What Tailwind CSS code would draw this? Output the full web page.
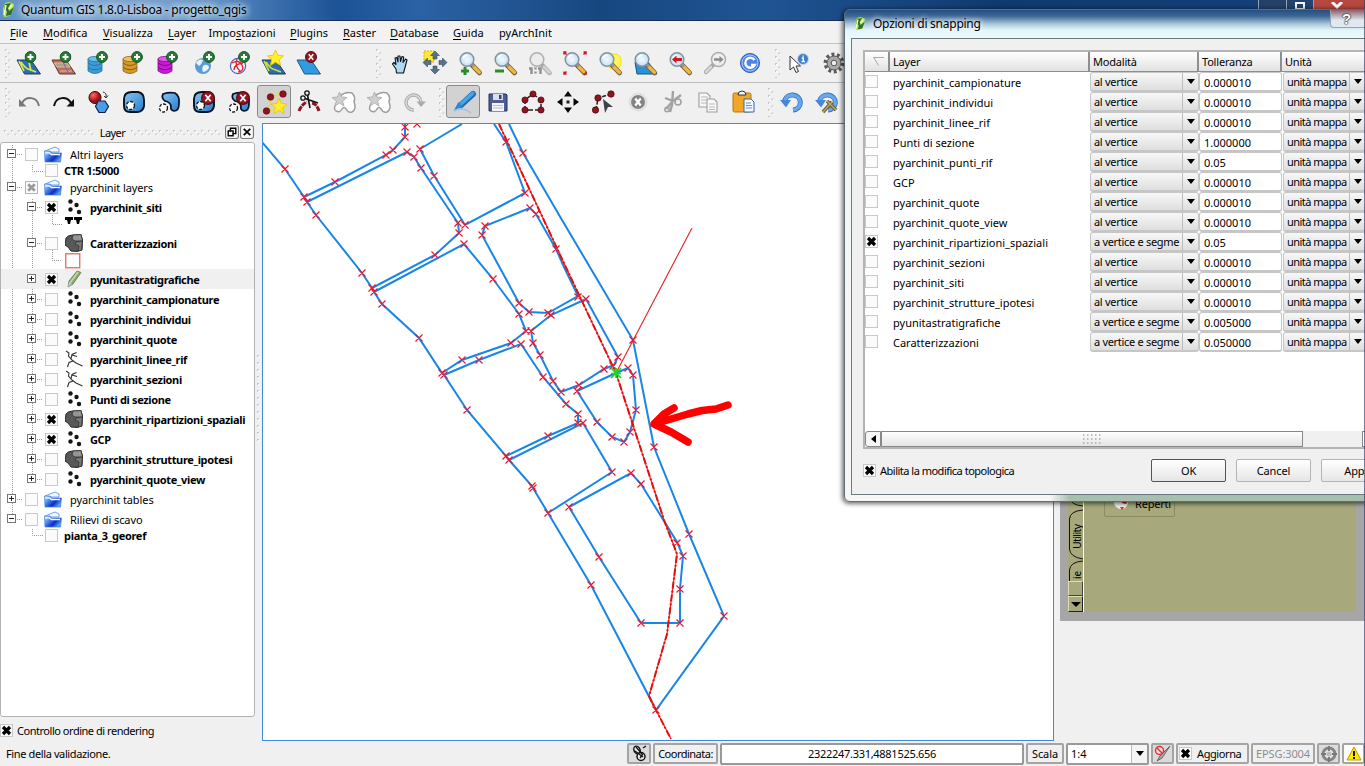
<!DOCTYPE html>
<html lang="it">
<head>
<meta charset="utf-8">
<title>Quantum GIS 1.8.0-Lisboa - progetto_qgis</title>
<script src="https://cdn.jsdelivr.net/npm/@tailwindcss/browser@4"></script>
</head>
<body class="bg-[#f0f0f0]">
<!-- shared icon symbols, 28 x 28 with the origin in the middle -->
<svg class="absolute h-0 w-0">
  <defs>
    <linearGradient id="gb" x1="0" y1="0" x2="1" y2="1"><stop offset="0" stop-color="#8cc4ee"/><stop offset="1" stop-color="#1f7fd0"/></linearGradient>
    <linearGradient id="gf" x1="0" y1="0" x2="1" y2=".6"><stop offset="0" stop-color="#e8f4ff"/><stop offset=".3" stop-color="#5a9cf0"/><stop offset=".7" stop-color="#0c2cc0"/><stop offset="1" stop-color="#5aa0f0"/></linearGradient>
    <radialGradient id="gl"><stop offset="0" stop-color="#f4fbff"/><stop offset="1" stop-color="#c3dff2"/></radialGradient>
    <radialGradient id="gr" cx=".35" cy=".3"><stop offset="0" stop-color="#ff6a6a"/><stop offset="1" stop-color="#a80c18"/></radialGradient>
    <symbol id="plus" viewBox="-6 -6 12 12"><circle r="5.4" fill="#2a7a38" stroke="#12501f"/><path d="M-3 0H3M0-3V3" stroke="#fff" stroke-width="1.9"/></symbol>
    <symbol id="ex" viewBox="-6 -6 12 12"><circle r="5.5" fill="#921620" stroke="#5e0a12"/><path d="M-2.3-2.8L2.3 2.8M2.3-2.8L-2.3 2.8" stroke="#fff" stroke-width="1.5"/></symbol>
    <symbol id="star" viewBox="-8 -8 16 16"><path d="M0-7.500L2.200-2.600L7.500-2L3.600 1.500L4.800 7L0 4L-4.800 7L-3.600 1.500L-7.500-2L-2.200-2.600Z" fill="#fff02a" stroke="#f4bc00" stroke-width=".8"/></symbol>
    <symbol id="lens" viewBox="-14 -14 28 28"><path d="M2 2L9.500 9.800" stroke="#7a6238" stroke-width="5" stroke-linecap="round"/><path d="M4 4L9.400 9.400" stroke="#f0b542" stroke-width="3.400" stroke-linecap="round"/><path d="M2 1.500L4 3.500" stroke="#999" stroke-width="3"/><circle cx="-3" cy="-3.500" r="6.800" fill="url(#gl)" stroke="#86939c" stroke-width="1.500"/><path d="M-7-4.500Q-6-8-2.500-7.800" stroke="#fff" stroke-width="1.500" fill="none"/></symbol>
    <symbol id="lensg" viewBox="-14 -14 28 28"><path d="M2 2L9.500 9.800" stroke="#a8a8a8" stroke-width="4.600" stroke-linecap="round"/><path d="M4 4L9.400 9.400" stroke="#d2d2d2" stroke-width="3" stroke-linecap="round"/><circle cx="-3" cy="-3.500" r="6.800" fill="#ececec" stroke="#aeaeae" stroke-width="1.500"/></symbol>

    <symbol id="addvec" viewBox="-14 -14 28 28"><path d="M-12-3H2L11.500 11H-4.500Z" fill="#2d6cb0" stroke="#1f3d5c"/><path d="M-8-1Q-4 5-1 6T7 9M-10-2L-5 8M0-1L2 8" stroke="#d9e94a" stroke-width="1.700" fill="none"/><use href="#plus" x="-4.500" y="-12" width="12" height="12"/></symbol>
    <symbol id="addras" viewBox="-14 -14 28 28"><path d="M-12-3H2L11.500 11H-4.500Z" fill="#b9705c" stroke="#5c3a30"/><path d="M-10 0H3L6 4H-7ZM-4 8H8" fill="#a9a487" stroke="#e9b7a2"/><path d="M-2-3L5 11" stroke="#7f5fa8"/><use href="#plus" x="-4.500" y="-12" width="12" height="12"/></symbol>
    <symbol id="addpg" viewBox="-14 -14 28 28"><path d="M-11-4V8Q-4 13 3 8V-4Z" fill="#3c9bd4" stroke="#2273a4" stroke-width=".8"/><ellipse cx="-4" cy="-4" rx="7" ry="2.600" fill="#6dbde8" stroke="#2273a4" stroke-width=".8"/><path d="M-11 0Q-4 5 3 0M-11 4.500Q-4 9 3 4.500" stroke="#2273a4" stroke-width=".9" fill="none"/><use href="#plus" x="-3" y="-12" width="12" height="12"/></symbol>
    <symbol id="addsl" viewBox="-14 -14 28 28"><path d="M-11-4V8Q-4 13 3 8V-4Z" fill="#d5992c" stroke="#8d6418" stroke-width=".8"/><ellipse cx="-4" cy="-4" rx="7" ry="2.600" fill="#ecc05f" stroke="#8d6418" stroke-width=".8"/><path d="M-11 0Q-4 5 3 0M-11 4.500Q-4 9 3 4.500" stroke="#7d560d" stroke-width=".9" fill="none"/><use href="#plus" x="-3" y="-12" width="12" height="12"/></symbol>
    <symbol id="addms" viewBox="-14 -14 28 28"><path d="M-11-4V8Q-4 13 3 8V-4Z" fill="#c91bd6" stroke="#820a8c" stroke-width=".8"/><ellipse cx="-4" cy="-4" rx="7" ry="2.600" fill="#e257ec" stroke="#820a8c" stroke-width=".8"/><path d="M-11 0Q-4 5 3 0M-11 4.500Q-4 9 3 4.500" stroke="#73087b" stroke-width=".9" fill="none"/><use href="#plus" x="-3" y="-12" width="12" height="12"/></symbol>
    <symbol id="addwms" viewBox="-14 -14 28 28"><circle cx="-1" cy="3" r="8" fill="#5b9bd5"/><path d="M-8 0Q-5-5-1-3Q-2 1-5 3ZM0 2Q5 1 5 5Q2 9-1 9Q-3 5 0 2Z" fill="#e8f3fb"/><use href="#plus" x="-1" y="-12" width="12" height="12"/></symbol>
    <symbol id="addwfs" viewBox="-14 -14 28 28"><circle cx="-1" cy="3" r="7.600" fill="#f6f6ff" stroke="#4a62c4" stroke-width="1.200"/><path d="M-7 0Q0-4 3 2T-1 9M-5 7Q-5 1 4 0M-2-4Q-5 3 2 9" stroke="#e0202c" stroke-width="1.400" fill="none"/><use href="#plus" x="-1" y="-12" width="12" height="12"/></symbol>
    <symbol id="newshp" viewBox="-14 -14 28 28"><path d="M-12-3H2L11.500 11H-4.500Z" fill="#2d6cb0" stroke="#1f3d5c"/><path d="M-8-1Q-4 5-1 6T7 9M-10-2L-5 8" stroke="#bfe04a" stroke-width="1.700" fill="none"/><use href="#star" x="-7" y="-13.500" width="17" height="17"/></symbol>
    <symbol id="remlay" viewBox="-14 -14 28 28"><path d="M-12-3H2L11.500 11H-4.500Z" fill="#2f9be0" stroke="#1c5a86"/><use href="#ex" x="-4" y="-12" width="12" height="12"/></symbol>

    <symbol id="hand" viewBox="-14 -14 28 28"><path d="M-3.500 10L-4 6L-7.500 1L-6-.5L-4 1.500L-5-5L-3.300-5.500L-2-1L-2-7L0-7L.5-1.500L2-6.500L3.700-6L3-.5L5.500-4L7-3L5 4.500L3.500 10Z" fill="#aed9f5" stroke="#111" stroke-width="1.100" stroke-linejoin="round"/></symbol>
    <symbol id="pansel" viewBox="-14 -14 28 28"><rect x="-11" y="-12" width="10" height="11" fill="#ffe838" stroke="#d8b400" stroke-dasharray="2 1"/><g fill="#54748c" stroke="#263a48" stroke-width=".5"><path d="M0-12L4.500-7.500H2V-4H-2V-7.500H-4.500Z"/><path d="M0 11L4.500 6.500H2V3H-2V6.500H-4.500Z"/><path d="M-12-.5L-7.500-5V-2.500H-4V1.500H-7.500V4Z"/><path d="M12-.5L7.500-5V-2.500H4V1.500H7.500V4Z"/></g></symbol>
    <symbol id="zin" viewBox="-14 -14 28 28"><use href="#lens" x="-14" y="-14" width="28" height="28"/><path d="M-9 8H-1M-5 4V12" stroke="#2c8a2c" stroke-width="3"/></symbol>
    <symbol id="zout" viewBox="-14 -14 28 28"><use href="#lens" x="-14" y="-14" width="28" height="28"/><path d="M-10 8H-1" stroke="#2c8a2c" stroke-width="3"/></symbol>
    <symbol id="zact" viewBox="-14 -14 28 28"><use href="#lensg" x="-14" y="-14" width="28" height="28"/><path d="M-11 5.500H-8.500V11M-4.500 4.500V6.500M-4.500 8.500V10.500M-2 5.500H.5V11" stroke="#8f8f8f" stroke-width="2.400" fill="none"/></symbol>
    <symbol id="zfull" viewBox="-14 -14 28 28"><use href="#lens" x="-14" y="-14" width="28" height="28"/><g stroke="#d01622" stroke-width="1.500" fill="none"><path d="M-11-8.500V-11H-8.500M-11-11L-8.500-8.500M11-8.500V-11H8.500M11-11L8.500-8.500M-11 8.500V11H-8.500M-11 11L-8.500 8.500M11 8.500V11H8.500"/></g></symbol>
    <symbol id="zsel" viewBox="-14 -14 28 28"><rect x="-3" y="-9" width="14" height="15" rx="6" fill="#fff65a" stroke="#f2e400"/><use href="#lens" x="-14" y="-14" width="28" height="28"/></symbol>
    <symbol id="zlay" viewBox="-14 -14 28 28"><path d="M-10-1H3L12 11H-8Z" fill="#2a92da" stroke="#17527e"/><use href="#lens" x="-14" y="-14" width="28" height="28"/></symbol>
    <symbol id="zlast" viewBox="-14 -14 28 28"><use href="#lens" x="-14" y="-14" width="28" height="28"/><path d="M-8-3.500L-3.500-7.500V-5H2V-2H-3.500V.5Z" fill="#d8141e"/></symbol>
    <symbol id="znext" viewBox="-14 -14 28 28"><path d="M-2 2L-9 9" stroke="#a6a6a6" stroke-width="4.500" stroke-linecap="round"/><path d="M-4 4L-9 9" stroke="#d6d6d6" stroke-width="2.600" stroke-linecap="round"/><circle cx="3.500" cy="-3.500" r="7" fill="#efefef" stroke="#adadad" stroke-width="1.500"/><path d="M8.500-3.500L4.500-7V-4.700H-1V-2.300H4.500V0Z" fill="#8c8c8c"/></symbol>
    <symbol id="refresh" viewBox="-14 -14 28 28"><circle r="9.500" fill="#4b86e6" stroke="#2c5cc0"/><circle r="8" fill="none" stroke="#a9c8fa" stroke-width="1"/><path d="M4.500-3A5 5 0 1 0 4.800 2H1" stroke="#fff" stroke-width="2.300" fill="none"/></symbol>
    <symbol id="ident" viewBox="-14 -14 28 28"><path d="M-9-7V7L-5.500 4L-3 9.500L-.5 8.500L-3 3H1.500Z" fill="#fff" stroke="#333"/><circle cx="4" cy="-4" r="5.500" fill="#3f7fc9" stroke="#c8d8ea"/><path d="M2.700-5H4.300V-1.800M2.500-1.500H6M4.200-7.500V-6.300" stroke="#fff" stroke-width="1.400" fill="none"/></symbol>
    <symbol id="gear" viewBox="-14 -14 28 28"><circle r="8.700" fill="none" stroke="#5a5a5a" stroke-width="3.500" stroke-dasharray="2.900 2.560"/><circle r="7" fill="#a9a9a9" stroke="#555"/><circle r="2.800" fill="#eee" stroke="#555"/></symbol>

    <symbol id="undo" viewBox="-14 -14 28 28"><path d="M10 4C8-6-3-6-7 1" stroke="#777" stroke-width="1.900" fill="none"/><path d="M-10-3V4.500H-2.500Z" fill="#777"/></symbol>
    <symbol id="redo" viewBox="-14 -14 28 28"><path d="M-10 4C-8-6 3-6 7 1" stroke="#111" stroke-width="2" fill="none"/><path d="M10-3V4.500H2.500Z" fill="#111"/></symbol>
    <symbol id="simpl" viewBox="-14 -14 28 28"><circle cx="-4" cy="-4.500" r="6" fill="url(#gr)" stroke="#300" stroke-width="1"/><path d="M-1-1H6L9.500 4.500L6 10.500H0L-3.500 4.500Z" fill="#4b9be6" stroke="#0c2444" stroke-width="1.200"/><path d="M4-10Q8-9 7-5M5-6L7-4L9-6.500" stroke="#333" fill="none"/></symbol>
    <symbol id="ring" viewBox="-14 -14 28 28"><path d="M-10-3Q-10-10-2-10H4Q10-9 10-2V4Q9 10 3 10H-4Q-10 10-10 4Z" fill="url(#gb)" stroke="#06121f" stroke-width="1.900"/><circle cx="-3.500" cy="3.500" r="4" fill="#fff" stroke="#111" stroke-width="1.300" stroke-dasharray="3 1.500"/></symbol>
    <symbol id="part" viewBox="-14 -14 28 28"><path d="M-6-8Q0-10 6-9Q11-6 10 2Q10 9 5 9Q1 8 2 4Q1 0-4-1Q-8-4-6-8Z" fill="url(#gb)" stroke="#06121f" stroke-width="1.700"/><circle cx="-5.500" cy="6" r="4" fill="#fff" stroke="#111" stroke-width="1.300" stroke-dasharray="3 1.500"/></symbol>
    <symbol id="delring" viewBox="-14 -14 28 28"><use href="#ring" x="-14" y="-14" width="28" height="28"/><use href="#ex" x="-3" y="-11" width="14" height="14"/></symbol>
    <symbol id="delpart" viewBox="-14 -14 28 28"><use href="#part" x="-14" y="-14" width="28" height="28"/><use href="#ex" x="-3" y="-11" width="14" height="14"/></symbol>
    <symbol id="reshape" viewBox="-14 -14 28 28"><path d="M-6 9L-1-10M-4-5L8-8M-8 8L4 8" stroke="#f0d820" stroke-width="1.500" stroke-dasharray="3 1" fill="none"/><g fill="#8e1420" stroke="#500810" stroke-width=".6"><circle cx="-7.500" cy="9" r="3.300"/><circle cx="-3.500" cy="-5" r="3.300"/><circle cx="9" cy="-8" r="3.300"/></g><path d="M5-4L7.200 1.500L13 2L8.600 5.800L10 11.500L5 8.300L0 11.500L1.400 5.800L-3 2L2.800 1.500Z" fill="#fff02a" stroke="#f4bc00" stroke-width=".8"/></symbol>
    <symbol id="split" viewBox="-14 -14 28 28"><path d="M-10 9Q-7 2-2 0M10 9Q8 2 3 1" stroke="#8e1420" stroke-width="3" stroke-dasharray="5 1" fill="none"/><circle cx="-6" cy="-4" r="2.200" fill="none" stroke="#111" stroke-width="1.300"/><circle cx="-2" cy="-9" r="2.200" fill="none" stroke="#111" stroke-width="1.300"/><path d="M-4-3.500L9 1M-1.500-7L1 6" stroke="#111" stroke-width="1.600"/></symbol>
    <symbol id="mergeg" viewBox="-14 -14 28 28"><path d="M-4-6Q2-11 8-9Q12-5 10 0Q13 7 8 10Q4 11 2 7Q0 4-2 7Q-4 11-8 9Q-11 7-8 2Z" fill="#fff" stroke="#9d9d9d" stroke-width="1.500"/><path d="M-4.500-10L-2.500-5L3-4.500L-1.500-1L0 4L-4.500 1L-9 4L-7.500-1L-12-4.500L-6.500-5Z" fill="#cfcfcf" stroke="#b2b2b2"/></symbol>
    <symbol id="rotg" viewBox="-14 -14 28 28"><path d="M0 8A7.500 7.500 0 1 1 7 0" stroke="#aaa" stroke-width="3.400" fill="none"/><path d="M0 8A7.500 7.500 0 1 1 7 0" stroke="#d6d6d6" stroke-width="1.600" fill="none"/><path d="M2.500-.5H12L7 5Z" fill="#aaa"/></symbol>
    <symbol id="edit" viewBox="-14 -14 28 28"><path d="M-9 9Q0 4 8 11" stroke="#9cc4e2" stroke-width="1.500" fill="none"/><path d="M10-8L-2 3" stroke="#1d6fb4" stroke-width="6" stroke-linecap="round"/><path d="M9.500-8.500L-1.500 1.500" stroke="#4ba3e2" stroke-width="3.600" stroke-linecap="round"/><path d="M-4.500 0L-9 8L-.5 5Z" fill="#2f86cc"/></symbol>
    <symbol id="save" viewBox="-14 -14 28 28"><path d="M-9-8H8L9-7V9H-9Z" fill="#4f5d92" stroke="#27305a"/><rect x="-5" y="-8" width="10" height="6" fill="#d9deee"/><rect x="1" y="-7" width="2.500" height="4" fill="#39436e"/><rect x="-6" y="1" width="12" height="8" fill="#f4f5fa"/><path d="M-5 3.500H5M-5 6H5" stroke="#b8bdd0"/></symbol>
    <symbol id="addfeat" viewBox="-14 -14 28 28"><path d="M0-8L8-2L8 8H-8L-8-2Z" stroke="#222" stroke-width="1.500" stroke-dasharray="5 2" fill="none"/><g fill="#8e1420" stroke="#450810" stroke-width=".7"><circle cy="-8" r="3.100"/><circle cx="8" cy="-2" r="3.100"/><circle cx="-8" cy="-2" r="3.100"/><circle cx="8" cy="8" r="3.100"/><circle cx="-8" cy="8" r="3.100"/></g></symbol>
    <symbol id="move" viewBox="-14 -14 28 28"><path d="M0-11L4-5.500H-4ZM0 11L4 5.500H-4ZM-11 0L-5.500-4V4ZM11 0L5.500-4V4Z" fill="#080808"/><rect x="-1.500" y="-1.500" width="3" height="3" fill="#222"/></symbol>
    <symbol id="node" viewBox="-14 -14 28 28"><path d="M-7 8L-5-4L8-8" stroke="#222" stroke-width="1.500" stroke-dasharray="4 1.500" fill="none"/><g fill="#8e1420" stroke="#450810" stroke-width=".7"><circle cx="-7.500" cy="8" r="3.200"/><circle cx="-5" cy="-4" r="3.200"/><circle cx="8" cy="-8" r="3.200"/></g><path d="M0-3L10 5H5L2 11Z" fill="#3c4246"/></symbol>
    <symbol id="delg" viewBox="-14 -14 28 28"><circle r="9" fill="#e6e6e6" stroke="#dcdcdc"/><circle r="7" fill="#858585"/><path d="M-2.700-3.500L2.700 3.500M2.700-3.500L-2.700 3.500" stroke="#fff" stroke-width="2.200"/></symbol>
    <symbol id="cutg" viewBox="-14 -14 28 28"><path d="M0-11L-1 3L-3 10M-8-4L0-1L8-7M-1 0L-7 7" stroke="#a2a2a2" stroke-width="2.400" fill="none"/><circle cx="-6" cy="7.500" r="2.200" fill="none" stroke="#a2a2a2" stroke-width="1.500"/><circle cx="5" cy="0" r="3" fill="none" stroke="#a2a2a2" stroke-width="1.600"/></symbol>
    <symbol id="copyg" viewBox="-14 -14 28 28"><g fill="#f8f8f8" stroke="#9d9d9d" stroke-width="1.100"><path d="M-9-9H-1L2-6V5H-9Z"/><path d="M-1-3H6L9 0V10H-1Z"/></g><path d="M-7-5H0M-7-2H-1M-7 1H-1M1 2H7M1 5H7M1 7.500H7" stroke="#b6b6b6"/></symbol>
    <symbol id="paste" viewBox="-14 -14 28 28"><rect x="-10" y="-9" width="18" height="19" rx="1.500" fill="#f0a626" stroke="#b97410"/><path d="M-5-7Q-5-11-1-11T3-7Z" fill="#f5f5f5" stroke="#333"/><path d="M1-3H8L11 0V10H1Z" fill="#f4f9ff" stroke="#2d6bb5"/><path d="M3 1H8M3 3.500H9M3 6H9" stroke="#5d94d6"/></symbol>
    <symbol id="blueundo" viewBox="-14 -14 28 28"><path d="M-7.500-1A8 7.500 0 1 1 1 8" stroke="#2d72c4" stroke-width="5" fill="none"/><path d="M-7.500-1A8 7.500 0 1 1 1 8" stroke="#6aa8ea" stroke-width="3.400" fill="none"/><path d="M-12-2H-1L-6 5.500Z" fill="#4688d8"/></symbol>
    <symbol id="bluewr" viewBox="-14 -14 28 28"><use href="#blueundo" x="-14" y="-14" width="28" height="28"/><path d="M-4 10L5 0M0-1L9 8" stroke="#6b5a30" stroke-width="3.500"/><path d="M-4 10L5 0M0-1L9 8" stroke="#b3a878" stroke-width="1.500"/></symbol>

    <symbol id="qgis" viewBox="0 0 14 16"><path d="M3 1L7 0L12 2L11 9L8 14L2 15L1 7Z" fill="#b7e84c"/><path d="M3 2L9 1L6 6L7 9L12 5L9 13L4 14L5 9L2 8Z" fill="#2f7030"/><path d="M4 3L2 13M10 3L7 7" stroke="#f3ffc8" stroke-width="1.600"/></symbol>
    <symbol id="folder" viewBox="0 0 18 17"><path d="M1 5L11 1L15 3V6H1Z" fill="#f4faff" stroke="#5f97e8" stroke-width=".9"/><path d="M.5 5H6L8 7H17.500L16.500 16H1Z" fill="url(#gf)" stroke="#3f7be0" stroke-width=".7"/><path d="M1.500 6.800H5.500L7.500 8.500H16" stroke="#fff" stroke-width="1.300" fill="none"/></symbol>
    <symbol id="pts" viewBox="0 0 18 18"><g fill="#151515"><circle cx="5.500" cy="3.500" r="2.200"/><circle cx="11.500" cy="7" r="2.200"/><circle cx="5.500" cy="11.500" r="2.200"/><circle cx="14" cy="14" r="2.200"/></g></symbol>
    <symbol id="poly" viewBox="0 0 18 18"><path d="M1 4Q3 1 8 1L16 .5L17.500 6L17 16L12 17.500L6 17L3 13L0 11Z" fill="#585858" stroke="#2c2c2c"/><path d="M8 1L16 .5L17.500 7H10L7 5Z" fill="#959595" stroke="#333" stroke-width=".8"/><path d="M11 8L17.500 7L16.500 16L13 17L14 12L10 10Z" fill="#777" stroke="#333" stroke-width=".8"/></symbol>
    <symbol id="line" viewBox="0 0 18 18"><path d="M1 1L4 3L3.500 6L7 10L11 13L17.500 16M8 11L4 12.500L2.500 17M6 9L7 4.500L11.500 2.500M7 5L12 6.500" stroke="#333" stroke-width="1.100" fill="none"/></symbol>
    <symbol id="pen" viewBox="0 0 18 18"><path d="M12 1L16 2.500L8 14L3 17L4 11Z" fill="#8aa86f" stroke="#5f7a55" stroke-width=".8"/><path d="M13 2L5 13" stroke="#c5dba6" stroke-width="1.500"/><path d="M4 12L3 17L7 14Z" fill="#b9c8d8"/></symbol>
    <symbol id="check" viewBox="0 0 13 13"><rect x=".5" y=".5" width="12" height="12" fill="#fbfbfb" stroke="#c9c9c9"/></symbol>
    <symbol id="checked" viewBox="0 0 13 13"><rect x=".5" y=".5" width="12" height="12" fill="#fbfbfb" stroke="#c9c9c9"/><path d="M3 3L10 10M10 3L3 10" stroke="#000" stroke-width="3.200"/></symbol>
    <symbol id="semi" viewBox="0 0 13 13"><rect x=".5" y=".5" width="12" height="12" fill="#fbfbfb" stroke="#b5b5b5"/><path d="M3.200 3.200L9.800 9.800M9.800 3.200L3.200 9.800" stroke="#9b9b9b" stroke-width="2.800"/></symbol>
    <symbol id="boxm" viewBox="0 0 10 10"><rect x=".5" y=".5" width="8" height="8" fill="#fff" stroke="#777"/><path d="M2 4.500H7" stroke="#222"/></symbol>
    <symbol id="boxp" viewBox="0 0 10 10"><rect x=".5" y=".5" width="8" height="8" fill="#fff" stroke="#777"/><path d="M2 4.500H7M4.500 2V7" stroke="#222"/></symbol>
    <pattern id="grip" width="7" height="7" patternUnits="userSpaceOnUse"><path d="M0 1h2v2H0zM3.500 4.500h2v2h-2z" fill="#c6c6c6"/><path d="M1 2h1.500v1.500H1zM4.500 5.500H6V7H4.500z" fill="#fff"/></pattern>
  </defs>
</svg>

<div class="relative flex h-[766px] w-[1365px] flex-col overflow-hidden bg-[#f0f0f0] font-['Noto_Sans','Open_Sans',sans-serif] text-[11px] leading-none text-black">

  <!-- title bar -->
  <header class="flex h-[21px] shrink-0 items-center border-b border-[#14305a] bg-[linear-gradient(90deg,#5d8fc4_0,#7fa6cf_60px,#6f9cca_200px,#3f73b0_262px,#1c5296_340px,#2b62a5_420px,#17477f_600px,#1f5493_760px,#0f3a6e_1000px,#123f77_1240px,#1a4a80)]">
    <svg class="ml-[2px] h-4 w-[14px]"><use href="#qgis"/></svg>
    <span class="ml-[5px] text-[12px] tracking-[-0.25px] whitespace-nowrap [text-shadow:0_0_6px_#dbe8f5,0_0_6px_#dbe8f5,0_0_9px_#dbe8f5]">Quantum GIS 1.8.0-Lisboa - progetto_qgis</span>
    <span class="ml-auto flex h-full text-white">
      <i class="block h-2.5 w-[29px] border-x border-slate-200/60 bg-slate-700/50"></i>
      <i class="flex h-2.5 w-[27px] justify-center border-r border-slate-200/60 bg-slate-700/40"><b class="mt-[2px] block h-2 w-2.5 border-2 border-slate-100"></b></i>
      <i class="flex h-3.5 w-[51px] justify-center bg-[#b5483f] pr-[5px]"><svg class="mt-[2px] h-2 w-3" viewBox="0 0 12 8"><path d="M1 0L6 5L11 0" stroke="#fff" stroke-width="3" fill="none"/></svg></i>
    </span>
  </header>

  <!-- menu -->
  <nav id="menu" class="flex h-[23px] shrink-0 items-center border-b border-[#c4c4c4] bg-[#f2f2f2] pl-[10px] whitespace-nowrap"></nav>

  <!-- toolbars -->
  <div class="flex h-[39px] shrink-0 items-center border-b border-[#bdbdbd]" id="bar1"></div>
  <div class="flex h-[39px] shrink-0 items-center pb-[2px]" id="bar2"></div>

  <main class="flex min-h-0 flex-1">
    <!-- layer panel -->
    <aside class="flex w-[255px] shrink-0 flex-col">
      <div class="flex h-[20px] shrink-0 items-center pl-1">
        <svg class="h-[7px] w-[90px]"><rect width="90" height="7" fill="url(#grip)"/></svg>
        <span class="w-[37px] text-center tracking-[-0.6px]">Layer</span>
        <svg class="h-[7px] w-[90px]"><rect width="90" height="7" fill="url(#grip)"/></svg>
        <svg class="ml-[4px] h-[14px] w-[14px]" viewBox="0 0 13 13"><rect x=".5" y=".5" width="12" height="12" rx="2" fill="#f4f4f4" stroke="#777"/><path d="M5 6V3H10V8H7" stroke="#000" stroke-width="1.300" fill="none"/><rect x="3" y="5.500" width="4.500" height="4.500" fill="none" stroke="#000" stroke-width="1.300"/></svg>
        <svg class="ml-px h-[14px] w-[14px]" viewBox="0 0 13 13"><rect x=".5" y=".5" width="12" height="12" rx="2" fill="#f4f4f4" stroke="#777"/><path d="M3.500 3.500L9.500 9.500M9.500 3.500L3.500 9.500" stroke="#000" stroke-width="1.600"/></svg>
      </div>
      <div class="relative h-[575px] shrink-0 rounded-[3px] border border-[#b2b2b2] bg-white pt-[2px]">
        <svg class="absolute top-0 left-0 h-[410px] w-[70px]" viewBox="1 143 70 410"><g stroke="#999" stroke-dasharray="1 1" fill="none"><path d="M12.500 145V520M32.500 199V480M32.500 165V171.500H43M52.500 215V224.500H62M52.500 250V260.500H62M32.500 529V535.500H43"/><path d="M17 154.500H22M17 187.500H22M17 499.500H22M17 519.500H22M37 207.500H42M37 243.500H42M37 279.500H42M37 299.500H42M37 319.500H42M37 339.500H42M37 359.500H42M37 379.500H42M37 399.500H42M37 419.500H42M37 439.500H42M37 459.500H42M37 479.500H42"/></g></svg>
        <div id="tree" class="flex flex-col"></div>
      </div>
      <label class="flex h-[31px] items-center pt-[3px] tracking-[-0.47px]"><svg class="mr-[4px] h-[13px] w-[13px]"><use href="#checked"/></svg>Controllo ordine di rendering</label>
    </aside>
    <div class="flex w-[7px] shrink-0 items-center justify-center"><svg class="mb-16 h-[90px] w-[3px]"><rect width="3" height="90" fill="url(#grip)"/></svg></div>

    <!-- map canvas -->
    <section class="mt-px h-[618px] w-[792px] shrink-0 border border-[#3f8adc] bg-white">
      <svg class="h-[616px] w-[790px]" viewBox="263 124 790 616">
        <g fill="none" stroke="#1886e6" stroke-width="2">
          <path d="M262 142L285 169L304 197L307 202L316 215L362 273L372 288L374 292L382 304L419 338L442 373L444 375L467 410L506 456L509 460L532 486L533 488L548 513L591 585L656 710L724 616L689 534L654 447L633 340L562 220L523 153L509 124"/>
          <path d="M304 197L335 182L386 155L393 150L405 137V123"/>
          <path d="M307 202L407 152L414 157L421 168L458 223L459 233L435 255L372 288"/>
          <path d="M462 124L420 149L434 175.500L465 225L525 193L506 142L494 124"/>
          <path d="M485 226L530 208L536 214L556 249L564 267L578 296L548 313L529 312L519 303L482 235Z"/>
          <path d="M374 292L464 244L493 279L519 314L526 331L511 343L462 360L442 373"/>
          <path d="M586 299L551 315L531 331L533 343L540 355L553 381L561 392L579 385L604 369L614 365L618 357Z"/>
          <path d="M444 375L479 360L521 344L543 377L566 404L578 414V423L548 436L506 456"/>
          <path d="M577 391L616 373L628 368L633 375L636 410L630 432L624 442L612 437L597 422Z"/>
          <path d="M509 460L583 423L612 472L548 513"/>
          <path d="M569 507L631 473L641 484L677 542L683 556L680 589V623H641L599 557Z"/>
        </g>
        <path d="M499 124L562 259L580 297L616 373L664 520L677 554L667 634L649 696L656 710L671 739" fill="none" stroke="#f22" stroke-width="1.200"/>
        <path d="M499 124L562 259L580 297L616 373L664 520L677 554L667 634L649 696L656 710L671 739" fill="none" stroke="#e01010" stroke-width="2" stroke-dasharray="7 2 2 2"/>
        <path d="M692 228L616 373" stroke="#e02020" stroke-width="1.100"/>
        <path id="marks" stroke="#f0142c" stroke-width="1.150" fill="none"/>
        <path d="M611 368L621 378M621 368L611 378M616 368V378M611 373.500H621" stroke="#12e012" stroke-width="1.700"/>
        <path d="M728 405L716 409L702 410.500L688 414L654 424L664 414L674 408M654 424L671 432L688 442" fill="none" stroke="#f00" stroke-width="7.500" stroke-linecap="round" stroke-linejoin="round"/>
      </svg>
    </section>

    <!-- docked plugin panel behind the dialog -->
    <section class="flex flex-1 flex-col pl-[6px]">
      <div class="flex h-[499px] border-b-[9px] border-[#a6a6a6] bg-[#a7a87b] pt-[330px]">
        <div class="w-[8px] bg-[#a6a6a6]"></div>
        <div class="flex h-full w-[16px] flex-col justify-end border-r border-white">
          <svg class="h-[83px] w-[15px]" viewBox="0 0 15 83"><path d="M15 8Q3 7 1.500 0M15 12Q2 13 1.500 21V51Q2 59 15 61M15 63Q2 64 1.500 72V83" stroke="#111" fill="none"/><text transform="translate(12.500 51) rotate(-90)" font-size="10.500" textLength="25">Utility</text><text transform="translate(12.500 81) rotate(-90)" font-size="10">ie</text></svg>
          <i class="block h-[15px] border border-t-[#ddddb8] border-r-[#444] border-b-[#444] border-l-[#ddddb8]"></i>
          <i class="flex h-[16px] items-center justify-center border border-t-[#ddddb8] border-r-[#222] border-b-[#222] border-l-[#ddddb8]"><svg class="h-[5px] w-[10px]"><path d="M0 0H10L5 5Z"/></svg></i>
        </div>
        <div class="flex-1 pl-[20px]">
          <div class="mt-[38px] flex h-[27px] w-[71px] items-center rounded-[2px] border border-[#8b8c63] pl-[8px]"><svg class="mr-[6px] h-4 w-4" viewBox="0 0 16 16"><circle cx="8" cy="6" r="7" fill="#f3f1ec"/><path d="M8 0L16 3L13 8L9 7Z" fill="#c01e20"/><path d="M7 11L9 14L11 11Z" fill="#c03a1e"/></svg><span class="tracking-[-0.2px]">Reperti</span></div>
        </div>
        <div class="w-[9px] bg-[#a6a6a6]"></div>
      </div>
    </section>
  </main>

  <!-- status bar -->
  <footer class="flex h-[26px] shrink-0 items-center gap-[2px] pt-px whitespace-nowrap [&>span]:shrink-0">
    <span class="w-[625px] pl-[6px] tracking-[-0.38px]">Fine della validazione.</span>
    <span class="flex h-[21px] w-[24px] items-center justify-center rounded-[2px] border-2 border-[#a4a4a4] bg-[#dcdcdc]"><svg class="h-[17px] w-[17px]" viewBox="0 0 17 17"><g fill="#eee" stroke="#111" stroke-width="1.500"><ellipse cx="6" cy="5" rx="3" ry="4" transform="rotate(-25 6 5)"/><circle cx="10" cy="11.500" r="4"/></g><path d="M4 6L12 12M5 2L11 9M12 3L15 1M9 13L12 9" stroke="#111" stroke-width="1.300"/></svg></span>
    <span class="flex h-[21px] w-[65px] items-center justify-center rounded-[2px] border-2 border-[#a4a4a4] tracking-[-0.5px]">Coordinata:</span>
    <span class="flex h-[22px] w-[304px] items-center justify-center rounded-[2px] border-2 border-[#999] bg-white tracking-[-0.28px]">2322247.331,4881525.656</span>
    <span class="flex h-[21px] w-[38px] items-center justify-center rounded-[2px] border-2 border-[#a4a4a4] tracking-[-0.1px]">Scala</span>
    <span class="flex h-[22px] w-[83px] items-center rounded-[2px] border-2 border-[#999] bg-white pl-[3px]">1:4<i class="ml-auto flex h-full w-[16px] items-center justify-center border-l border-[#bbb] bg-[#f4f4f4]"><svg class="h-[5px] w-[8px]"><path d="M0 0H8L4 5Z"/></svg></i></span>
    <span class="flex h-[21px] w-[23px] items-center justify-center rounded-[2px] border-2 border-[#a4a4a4] bg-[#dadada]"><svg class="h-[17px] w-[17px]" viewBox="0 0 17 17"><path d="M16 1L8 13L3 16L6 11Z" fill="#aaa" stroke="#666"/><circle cx="5.500" cy="5.500" r="4" fill="#fbe5e5" stroke="#e0303a" stroke-width="1.500"/><path d="M3 3L8 8" stroke="#e0303a" stroke-width="1.500"/></svg></span>
    <span class="flex h-[21px] w-[73px] items-center rounded-[2px] border-2 border-[#a4a4a4] pl-[1px] tracking-[-0.4px]"><svg class="mr-[5px] h-[13px] w-[13px]"><use href="#checked"/></svg>Aggiorna</span>
    <span class="flex h-[21px] w-[64px] items-center justify-center rounded-[2px] border-2 border-[#a4a4a4] tracking-[-0.1px] text-[#8c8c8c]">EPSG:3004</span>
    <span class="flex h-[21px] w-[23px] items-center justify-center rounded-[2px] border-2 border-[#a4a4a4] bg-[#dcdcdc]"><svg class="h-[16px] w-[16px]" viewBox="0 0 16 16"><circle cx="8" cy="8" r="6" fill="#e6e6e6" stroke="#858585" stroke-width="3"/><path d="M8 0V5M8 11V16M0 8H5M11 8H16" stroke="#777" stroke-width="1.800"/><circle cx="8" cy="8" r="2.500" fill="#bbb"/></svg></span>
    <span class="flex h-[21px] w-[23px] items-center justify-center rounded-[2px] border-2 border-[#a4a4a4] bg-white"><svg class="h-[15px] w-[16px]" viewBox="0 0 16 15"><path d="M8 1L15 14H1Z" fill="#ffe800" stroke="#b89c00"/><path d="M8 5V10M8 11V13" stroke="#000" stroke-width="1.800"/></svg></span>
  </footer>

  <!-- snapping options dialog, floating over the main window -->
  <div class="absolute top-[9px] left-[844px] flex h-[493px] w-[540px] flex-col rounded-[6px] border border-[#5f6b75] bg-[linear-gradient(90deg,transparent_205px,#a6bfae_225px),linear-gradient(180deg,#244e83_0,#3d6695_6px,#a9c6da_14px,#e4f5fa_20px,#eefbfd_30px,#f2f6f8_60px,#f6f6f6_100%)] bg-[size:100%_6px,100%_100%] bg-bottom bg-no-repeat px-[6px] pb-[6px] shadow-[-1px_1px_4px_1px_rgba(0,0,0,0.55)]">
    <div class="flex h-[28px] shrink-0 items-center">
      <svg class="ml-[3px] h-[14px] w-[13px]" viewBox="0 0 14 16"><use href="#qgis" width="14" height="16"/></svg>
      <span class="ml-[6px] pb-px text-[12px] tracking-[-0.25px] [text-shadow:0_0_6px_#fff,0_0_6px_#fff]">Opzioni di snapping</span>
      <span class="mb-auto ml-auto flex h-[18px] w-[47px] justify-start rounded-bl-[4px] border border-t-0 border-[#93a5b2] bg-[linear-gradient(180deg,#8d5f6c,#dfe9ef_60%)] pl-[11px] font-['Liberation_Sans'] text-[15px] leading-[17px] font-bold text-white [text-shadow:0_0_2px_#222,0_0_1px_#222,0_0_1px_#222]">?</span>
    </div>
    <div class="flex min-h-0 flex-1 flex-col border border-[#6d7a80] bg-[#f0f0f0] pt-[11px] pl-[11px]">
      <div class="h-[399px] shrink-0 overflow-hidden border-2 border-r-0 border-[#b4b4b4] bg-white">
        <div class="flex h-[20px] items-center [&>span]:flex [&>span]:h-[20px] [&>span]:shrink-0 [&>span]:items-center [&>span]:border-r-2 [&>span]:border-b [&>span]:border-[#8e8e8e] [&>span]:bg-linear-to-b [&>span]:from-white [&>span]:to-[#e2e2e2] [&>span]:pl-[3px] [&>span]:tracking-[-0.2px]">
          <span class="w-[25px] justify-center"><svg class="h-[9px] w-[11px]"><path d="M0 .5H11M.5 0L5.500 8.500" stroke="#aaa" fill="none"/></svg></span>
          <span class="w-[200px]">Layer</span><span class="w-[109px]">Modalità</span><span class="w-[83px]">Tolleranza</span><span class="w-[120px]">Unità</span>
        </div>
        <div id="rows" class="flex h-[358px] flex-col"></div>
        <div class="flex h-[17px] items-center [&>i]:shrink-0">
          <i class="flex h-[16px] w-[16px] items-center justify-center rounded-l-[3px] border border-[#888] bg-[#f6f6f6]"><svg class="h-[8px] w-[5px]"><path d="M5 0V8L0 4Z"/></svg></i>
          <i class="flex h-[16px] w-[422px] items-center justify-center border border-[#888] bg-linear-to-b from-white to-[#e4e4e4]"><svg class="h-[11px] w-[19px]"><g stroke="#aaa" stroke-width="1.500" stroke-dasharray="1.500 2.500"><path d="M0 2H19M0 6H19M0 10H19"/></g></svg></i>
          <i class="h-[16px] w-[59px] bg-[#f0f0f0]"></i><i class="h-[16px] w-[16px] border border-[#888]"></i>
        </div>
      </div>
      <div class="flex h-[43px] items-center [&>button]:h-[23px] [&>button]:shrink-0 [&>button]:rounded-[2px] [&>button]:border [&>button]:bg-linear-to-b [&>button]:from-white [&>button]:to-[#e6e6e6] [&>button]:tracking-[-0.1px]">
        <label class="flex w-[288px] shrink-0 items-center tracking-[-0.5px]"><svg class="mr-[4px] h-[13px] w-[13px]"><use href="#checked"/></svg>Abilita la modifica topologica</label>
        <button class="w-[75px] border-[#555]">OK</button>
        <button class="ml-[10px] w-[75px] border-[#b4b4b4]">Cancel</button>
        <button class="ml-[10px] w-[75px] border-[#b4b4b4]">Apply</button>
      </div>
    </div>
  </div>
  <i class="absolute top-0 right-0 h-[766px] w-px bg-[#2c4a66]/70"></i>
</div>

<script>
  // menu entries: before the mnemonic, mnemonic, after it, width of the slot
  document.getElementById('menu').innerHTML = [
    ['','F','ile',33],['','M','odifica',60],['','V','isualizza',65],['','L','ayer',40.5],['Impo','s','tazioni',81.5],
    ['','P','lugins',53],['','R','aster',47],['','D','atabase',63],['','G','uida',46],['pyArchInit','','',60]
  ].map(m => `<span class="shrink-0" style="width:${m[3]}px">${m[0]}<u class="underline-offset-2">${m[1]}</u>${m[2]}</span>`).join('');

  const ico = n => `<span class="flex w-[35px] shrink-0 justify-center"><svg class="h-7 w-7" viewBox="0 0 28 28"><use href="#${n}" width="28" height="28"/></svg></span>`;
  const down = n => `<span class="flex w-[35px] shrink-0 justify-center"><i class="flex h-[33px] w-[34px] shrink-0 items-center justify-center rounded-[3px] border border-[#8a8a8a] bg-[#d2d2d2]"><svg class="h-7 w-7" viewBox="0 0 28 28"><use href="#${n}" width="28" height="28"/></svg></i></span>`;
  const grip = `<svg class="h-[30px] w-[6px] shrink-0"><rect width="6" height="30" fill="url(#grip)"/></svg>`;
  const gap = w => `<i class="shrink-0" style="width:${w}px"></i>`;
  document.getElementById('bar1').innerHTML = gap(5) + grip +
    ['addvec','addras','addpg','addsl','addms','addwms','addwfs','newshp','remlay'].map(ico).join('') + gap(50) + grip +
    ['hand','pansel','zin','zout','zact','zfull','zsel','zlay','zlast','znext','refresh'].map(ico).join('') + gap(8) + grip +
    ['ident','gear'].map(ico).join('');
  document.getElementById('bar2').innerHTML = gap(5) + grip +
    ['undo','redo','simpl','ring','part','delring','delpart'].map(ico).join('') + down('reshape') +
    ['split','mergeg','mergeg','rotg'].map(ico).join('') + gap(8) + grip + down('edit') +
    ['save','addfeat','move','node','delg','cutg','copyg','paste'].map(ico).join('') + gap(8) + grip +
    ['blueundo','bluewr'].map(ico).join('');

  // layer tree: level, expander, check state, icon, label
  const use = (id, w, h, cls) => `<svg class="${cls}" style="width:${w}px;height:${h}px"><use href="#${id}"/></svg>`;
  const group = (box, chk, t, h) => `<div class="relative flex shrink-0 items-center pl-[6px]" style="height:${h}px">${use(box,10,10,'mr-[8px]')}${use(chk,13,13,'mr-[6px]')}${use('folder',18,17,'mr-[8px]')}<span class="tracking-[-0.1px]">${t}</span></div>`;
  const leaf = (t, h) => `<div class="relative flex shrink-0 items-center pl-[44px]" style="height:${h}px">${use('check',13,13,'mr-[6px]')}<b class="tracking-[-0.3px]">${t}</b></div>`;
  const layer = (box, on, icon, t, sel) => `<div class="relative flex h-[20px] shrink-0 items-center pl-[26px] ${sel ? 'bg-[#f0f0f0]' : ''}">${use(box,10,10,'mr-[8px]')}${use(on ? 'checked' : 'check',13,13,'mr-[7px]')}${use(icon,18,18,'mr-[7px]')}<b class="tracking-[-0.35px] whitespace-nowrap">${t}</b></div>`;
  document.getElementById('tree').innerHTML =
    group('boxm','check','Altri layers',18) + leaf('CTR 1:5000',14) + group('boxm','semi','pyarchinit layers',20) +
    layer('boxm',1,'pts','pyarchinit_siti') +
    `<div class="relative h-[16px] shrink-0 pl-[64px]"><svg class="h-[9px] w-[17px]"><path d="M0 0H8V3H6L5 7H3L2 3H0ZM9 0H17V3H15L14 7H12L11 3H9Z"/></svg></div>` +
    layer('boxm',0,'poly','Caratterizzazioni') +
    `<div class="relative h-[16px] shrink-0 pl-[64px]"><svg class="h-[16px] w-[16px]"><rect x=".75" y=".75" width="14" height="14" fill="#fff" stroke="#e46c58" stroke-width="1.300"/></svg></div>` +
    layer('boxp',1,'pen','pyunitastratigrafiche',1) + layer('boxp',0,'pts','pyarchinit_campionature') +
    layer('boxp',0,'pts','pyarchinit_individui') + layer('boxp',0,'pts','pyarchinit_quote') +
    layer('boxp',0,'line','pyarchinit_linee_rif') + layer('boxp',0,'line','pyarchinit_sezioni') +
    layer('boxp',0,'pts','Punti di sezione') + layer('boxp',1,'poly','pyarchinit_ripartizioni_spaziali') +
    layer('boxp',1,'pts','GCP') + layer('boxp',0,'poly','pyarchinit_strutture_ipotesi') +
    layer('boxp',0,'pts','pyarchinit_quote_view') + group('boxp','check','pyarchinit tables',20) +
    group('boxm','check','Rilievi di scavo',20) + leaf('pianta_3_georef',12);

  // snapping table
  const v = 'al vertice', s = 'a vertice e segme', d = '0.000010';
  const arrow = `<i class="flex h-full w-[16px] shrink-0 items-center justify-center border-l border-[#bcbcbc]"><svg class="h-[5px] w-[8px]"><path d="M0 0H8L4 5Z"/></svg></i>`;
  const combo = 'mt-[-1px] flex h-[20px] shrink-0 items-center rounded-[3px] border border-b-2 border-[#c6c6c6] bg-linear-to-b from-[#f8f8f8] to-[#dedede] pl-[3px]';
  document.getElementById('rows').innerHTML = [
    ['pyarchinit_campionature',v,d],['pyarchinit_individui',v,d],['pyarchinit_linee_rif',v,d],['Punti di sezione',v,'1.000000'],
    ['pyarchinit_punti_rif',v,'0.05'],['GCP',v,d],['pyarchinit_quote',v,d],['pyarchinit_quote_view',v,d],
    ['pyarchinit_ripartizioni_spaziali',s,'0.05',1],['pyarchinit_sezioni',v,d],['pyarchinit_siti',v,d],
    ['pyarchinit_strutture_ipotesi',v,d],['pyunitastratigrafiche',s,'0.005000'],['Caratterizzazioni',s,'0.050000']
  ].map(r => `<div class="flex h-[20px] shrink-0 items-center whitespace-nowrap">${use(r[3] ? 'checked' : 'check',13,13,'mb-[2px] shrink-0')}<span class="w-[212px] shrink-0 pt-px pl-[15px]">${r[0]}</span><span class="w-[109px] tracking-[-0.3px] ${combo}"><span class="flex-1">${r[1]}</span>${arrow}</span><span class="flex h-[20px] w-[83px] shrink-0 items-center rounded-[3px] border border-b-2 border-[#c6c6c6] bg-white pt-px pl-[4px]">${r[2]}</span><span class="ml-px w-[83px] tracking-[-0.55px] ${combo}"><span class="flex-1">unità mappa</span>${arrow}</span></div>`).join('');

  // vertex markers of the edited layer
  document.getElementById('marks').setAttribute('d', [
    [285,169],[304,197],[307,202],[316,215],[362,273],[372,288],[374,292],[382,304],[419,338],[442,373],[444,375],[467,410],[506,456],[509,460],
    [532,486],[533,488],[548,513],[591,585],[656,710],[724,616],[689,534],[654,447],[633,340],[523,153],[335,182],[386,155],[393,150],[405,137],
    [405,127],[417,124],[407,152],[414,157],[421,168],[458,223],[459,233],[435,255],[420,149],[434,176],[465,225],[525,193],[506,142],[485,226],
    [530,208],[536,214],[556,249],[578,297],[548,313],[529,312],[519,303],[482,235],[464,244],[493,279],[519,314],[526,331],[511,343],[462,360],
    [586,299],[551,315],[531,331],[533,343],[540,355],[553,381],[561,392],[579,385],[604,369],[613,366],[618,357],[479,360],[521,344],[543,377],
    [566,404],[578,414],[578,423],[548,436],[577,391],[628,368],[633,375],[636,410],[630,432],[624,442],[612,437],[597,422],[583,423],[612,472],
    [569,507],[631,473],[641,484],[677,543],[683,556],[680,589],[680,623],[641,623],[599,557]
  ].map(([x, y]) => `M${x-3.5} ${y-3.5}l7 7M${x+3.5} ${y-3.5}l-7 7`).join(''));
</script>
</body>
</html>
